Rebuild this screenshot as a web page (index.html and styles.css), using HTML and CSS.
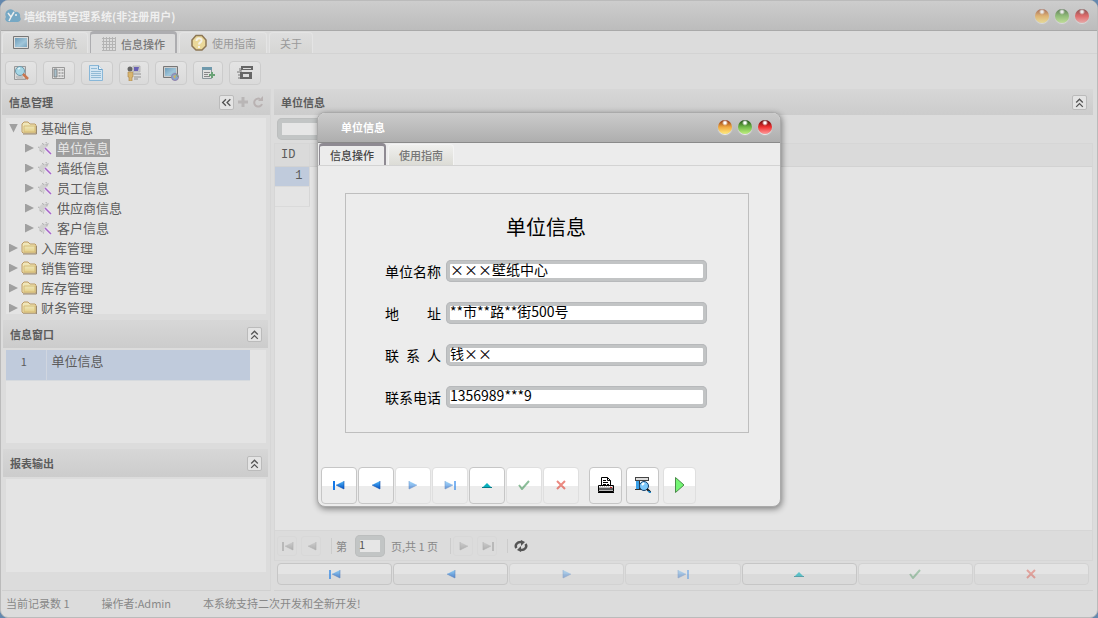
FILE: index.html
```html
<!DOCTYPE html>
<html lang="zh-CN">
  <head>
    <meta charset="UTF-8" />
    <meta name="viewport" content="width=device-width, initial-scale=1.0" />
    <title>墙纸销售管理系统</title>
    <link rel="stylesheet" href="styles.css">
  </head>
  <body>
    <!-- 图标 -->
    <svg class="sprite" aria-hidden="true">
      <defs>
        <linearGradient id="g-blue" x1="0" y1="0" x2="0" y2="1">
          <stop offset="0" stop-color="#55b8f8" />
          <stop offset="1" stop-color="#0052c8" />
        </linearGradient>
        <linearGradient id="g-folder" x1="0" y1="0" x2="0" y2="1">
          <stop offset="0" stop-color="#eee8bb" />
          <stop offset="1" stop-color="#e4ce88" />
        </linearGradient>
        <linearGradient id="g-screen" x1="0" y1="0" x2="1" y2="1">
          <stop offset="0" stop-color="#6f9dba" />
          <stop offset="0.6" stop-color="#a0c6da" />
          <stop offset="1" stop-color="#7ba6bf" />
        </linearGradient>
      </defs>
      <symbol id="first" viewBox="0 0 12 10">
        <path d="M0 1h2v9H0z" fill="#1478e8" />
        <path d="M11 1v8L3 5z" fill="url(#g-blue)" />
        <path d="M3 5l8 4V1" fill="none" stroke="#0a4ca8" stroke-width="0.6" />
      </symbol>
      <symbol id="prev" viewBox="0 0 12 10">
        <path d="M10 1v8L2 5z" fill="url(#g-blue)" />
        <path d="M2 5l8 4V1" fill="none" stroke="#0a4ca8" stroke-width="0.6" />
      </symbol>
      <symbol id="next" viewBox="0 0 12 10">
        <path d="M2 1v8l8-4z" fill="url(#g-blue)" />
        <path d="M2 1v8l8-4" fill="none" stroke="#0a4ca8" stroke-width="0.6" />
      </symbol>
      <symbol id="last" viewBox="0 0 12 10">
        <path d="M1 1v8l8-4z" fill="url(#g-blue)" />
        <path d="M1 1v8l8-4" fill="none" stroke="#0a4ca8" stroke-width="0.6" />
        <path d="M10 1h2v9h-2z" fill="#1478e8" />
      </symbol>
      <symbol id="up" viewBox="0 0 12 10">
        <path d="M1 8h10L6 3z" fill="#08b0bc" />
        <path d="M1 7.500h10" stroke="#077a88" />
      </symbol>
      <symbol id="check" viewBox="0 0 12 10">
        <path d="M1 5l3 4 7-8" fill="none" stroke="#2f8a48" stroke-width="2" />
      </symbol>
      <symbol id="cross" viewBox="0 0 12 10">
        <path d="M2 1l8 8M10 1L2 9" stroke="#dc2a1a" stroke-width="2" />
      </symbol>
      <symbol id="folder" viewBox="0 0 16 14">
        <path d="M1 11V3l2-2h4l2 2h5l1 1v8H2z" fill="#f0e6b8" stroke="#bb9a62" />
        <path d="M3 5h11v6H3z" fill="url(#g-folder)" stroke="#d5bc79" />
        <path d="M2 13h13.500V5" fill="none" stroke="#9a8a70" />
      </symbol>
      <symbol id="wand" viewBox="0 0 16 14">
        <path d="M2 6l4-4 4 2-1 5-3 3-4-2z" fill="#d0d0d0" />
        <path d="M5 2l2 2M1 6l2 1M3 9l2 2M9 1l1 3M6 12h2" stroke="#a8a8a8" stroke-dasharray="1 1" />
        <path d="M8 3l4-1-2 4z" fill="#bcbcbc" />
        <path d="M8 7l6 6" stroke="#efe6f4" stroke-width="3" />
        <path d="M8 7l6 6" stroke="#a565c8" stroke-width="1.500" />
      </symbol>
      <symbol id="dblup" viewBox="0 0 10 10">
        <path d="M2 5l3-3 3 3M2 9l3-3 3 3" fill="none" stroke="#555" stroke-width="1.200" />
      </symbol>
    </svg>

    <div class="window">
      <header class="titlebar">
        <svg class="logo" viewBox="0 0 16 14">
          <path d="M3 13a3 3 0 0 1-2-5 5 5 0 0 1 9-5 4 4 0 0 1 5 5 3 3 0 0 1-2 5z" fill="#76a8c4" />
          <path d="M3 4l3 4 3-5M6 8l-2 4M10 6h2" fill="none" stroke="#eee" stroke-width="1.500" />
        </svg>
        <h1>墙纸销售管理系统(非注册用户)</h1>
        <div class="lights faded">
          <button class="light orange" aria-label="最小化"></button>
          <button class="light green" aria-label="最大化"></button>
          <button class="light red" aria-label="关闭"></button>
        </div>
      </header>

      <nav class="tabs main-tabs">
        <button class="tab">
          <svg width="16" height="14" viewBox="0 0 16 14">
            <path d="M.5.500h15v12H.5z" fill="#ddd" stroke="#777" />
            <path d="M2 2h12v9H2z" fill="url(#g-screen)" />
          </svg>
          系统导航
        </button>
        <button class="tab active">
          <svg width="16" height="16" viewBox="0 0 16 16">
            <path d="M2.500 1v14M5.500 1v14M8.500 1v14M11.500 1v14M14.500 1v14M1 2.500h14M1 5.500h14M1 8.500h14M1 11.500h14M1 14.500h14" stroke="#b4b4b4" />
          </svg>
          信息操作
        </button>
        <button class="tab">
          <svg width="18" height="18" viewBox="0 0 18 18">
            <path d="M6 1.500h6L16 6v6l-4 4H6l-4-4V6z" fill="#ead89a" stroke="#8d7755" stroke-width="1.500" />
            <path d="M6.500 7c0-4 6-3 5 0-.5 1.500-2.500 1.500-2.500 3.500M9 12v2" fill="none" stroke="#f5f2e8" stroke-width="2" />
          </svg>
          使用指南
        </button>
        <button class="tab">关于</button>
      </nav>

      <div class="toolbar">
        <button aria-label="查找">
          <svg width="16" height="16" viewBox="0 0 16 16">
            <path d="M1.500 1.500h11v13h-11z" fill="#d9d9d9" stroke="#999" />
            <path d="M3 12h7M4 14h8" stroke="#aaa" />
            <circle cx="7" cy="6" r="4.500" fill="#a5d6e5" stroke="#6f98aa" />
            <path d="M5 4l2-1" stroke="#e4f4f8" stroke-width="1.500" />
            <path d="M10 9l5 5" stroke="#c9764f" stroke-width="2.500" />
          </svg>
        </button>
        <button aria-label="表单">
          <svg width="16" height="16" viewBox="0 0 16 16">
            <path d="M1.500 2.500h12v11h-12z" fill="#e3e3e3" stroke="#999" />
            <path d="M3 4h3v8H3z" fill="#a8c0cc" stroke="#777" stroke-width=".8" />
            <path d="M7.500 5h2M7.500 8h2M7.500 11h2M10.500 5h2M10.500 8h2M10.500 11h2" stroke="#777" />
          </svg>
        </button>
        <button aria-label="文档">
          <svg width="16" height="16" viewBox="0 0 16 16">
            <path d="M.5.500h9l4 4v11H.5z" fill="#d3e5f2" stroke="#88b7d8" />
            <path d="M9.500.5v4h4" fill="#eef5f9" stroke="#6ea1c7" />
            <path d="M2 3.500h6M2 6.500h10M2 8.500h10M2 10.500h10M2 12.500h10" stroke="#91bad5" />
          </svg>
        </button>
        <button aria-label="用户">
          <svg width="14" height="16" viewBox="0 0 14 16">
            <circle cx="3" cy="4" r="2.500" fill="#666" />
            <path d="M1 7h5v5H5v4H2v-4H1z" fill="#d8b56f" stroke="#b18d54" stroke-width=".7" />
            <path d="M6 1h7v6H6z" fill="#ccc" stroke="#aaa" stroke-width=".7" />
            <path d="M7 2h5l-1 4H7z" fill="#6960b4" />
            <path d="M6 9h8M7 12h7M7 14h4" stroke="#aaa" stroke-width="1.500" />
          </svg>
        </button>
        <button aria-label="网络">
          <svg width="16" height="16" viewBox="0 0 16 16">
            <path d="M.5 1.500h14v11H.5z" fill="#ccc" stroke="#777" />
            <path d="M2 3h11v8H2z" fill="url(#g-screen)" />
            <circle cx="12" cy="12" r="3.500" fill="#87a6cd" stroke="#9280aa" />
            <path d="M10 11l3-1-1 4z" fill="#d0b25f" />
            <path d="M13 9l2 3" stroke="#7fa469" />
          </svg>
        </button>
        <button aria-label="添加">
          <svg width="14" height="16" viewBox="0 0 14 16">
            <path d="M1.500 2.500h9v11h-9z" fill="#e0e0e0" stroke="#8b969b" />
            <path d="M1 2h10v3H1z" fill="#6f99ac" />
            <path d="M3 7.500h6M3 9.500h4M3 11.500h6" stroke="#888" />
            <path d="M11 7v6M8 10h6" stroke="#6aa276" stroke-width="2" />
          </svg>
        </button>
        <button aria-label="窗口">
          <svg width="16" height="16" viewBox="0 0 16 16">
            <path d="M4 1h12v4H4zM3 7h12v7H3z" fill="#666" />
            <path d="M6 9h6v3H6zM6 3h8v1H6z" fill="#ddd" />
            <path d="M3 3v3h2M0 7h3M1 10h2M1 13h2" fill="none" stroke="#777" />
          </svg>
        </button>
      </div>

      <main class="content">
        <aside class="sidebar">
          <div class="panel-head first-head">
            <h2>信息管理</h2>
            <button class="tool" aria-label="收起">
              <svg viewBox="0 0 10 10"><path d="M4.500 2l-3 3 3 3M8.500 2l-3 3 3 3" fill="none" stroke="#555" stroke-width="1.200" /></svg>
            </button>
            <button class="plain" aria-label="新增">
              <svg viewBox="0 0 12 12"><path d="M6 1v10M1 6h10" stroke="#b9b6b6" stroke-width="3" /></svg>
            </button>
            <button class="plain" aria-label="刷新">
              <svg viewBox="0 0 12 12"><path d="M10 8a4 4 0 1 1-2-5" fill="none" stroke="#b9b2b2" stroke-width="2" /><path d="M11 0v5H6z" fill="#b9b2b2" /></svg>
            </button>
          </div>
          <ul class="panel-body tree">
            <li><i class="arrow open"></i><svg><use href="#folder" /></svg><span>基础信息</span></li>
            <li class="child"><i class="arrow"></i><svg><use href="#wand" /></svg><span class="selected">单位信息</span></li>
            <li class="child"><i class="arrow"></i><svg><use href="#wand" /></svg><span>墙纸信息</span></li>
            <li class="child"><i class="arrow"></i><svg><use href="#wand" /></svg><span>员工信息</span></li>
            <li class="child"><i class="arrow"></i><svg><use href="#wand" /></svg><span>供应商信息</span></li>
            <li class="child"><i class="arrow"></i><svg><use href="#wand" /></svg><span>客户信息</span></li>
            <li><i class="arrow"></i><svg><use href="#folder" /></svg><span>入库管理</span></li>
            <li><i class="arrow"></i><svg><use href="#folder" /></svg><span>销售管理</span></li>
            <li><i class="arrow"></i><svg><use href="#folder" /></svg><span>库存管理</span></li>
            <li><i class="arrow"></i><svg><use href="#folder" /></svg><span>财务管理</span></li>
          </ul>

          <div class="panel-head">
            <h2>信息窗口</h2>
            <button class="tool" aria-label="折叠信息窗口"><svg><use href="#dblup" /></svg></button>
          </div>
          <div class="panel-body">
            <table class="window-list">
              <tr>
                <td class="num">1</td>
                <td>单位信息</td>
              </tr>
            </table>
          </div>

          <div class="panel-head">
            <h2>报表输出</h2>
            <button class="tool" aria-label="折叠报表输出"><svg><use href="#dblup" /></svg></button>
          </div>
          <div class="panel-body"></div>
        </aside>

        <section class="center">
          <div class="panel-head">
            <h2>单位信息</h2>
            <button class="tool" aria-label="折叠单位信息"><svg><use href="#dblup" /></svg></button>
          </div>
          <div class="filter">
            <input class="box" type="text" aria-label="查询" />
          </div>
          <div class="grid">
            <table>
              <thead>
                <tr><th class="id">ID</th><th></th></tr>
              </thead>
              <tbody>
                <tr><td class="id current">1</td><td></td></tr>
                <tr><td class="id"></td><td></td></tr>
              </tbody>
            </table>
          </div>
          <div class="pager">
            <button disabled aria-label="首页"><svg><use href="#first" /></svg></button>
            <button disabled aria-label="上一页"><svg><use href="#prev" /></svg></button>
            <label for="page">第</label>
            <input id="page" class="box" type="text" value="1" />
            <span class="total">页,共 1 页</span>
            <button disabled aria-label="下一页"><svg><use href="#next" /></svg></button>
            <button disabled aria-label="末页"><svg><use href="#last" /></svg></button>
            <i class="sep"></i>
            <button class="reload" aria-label="刷新列表">
              <svg viewBox="0 0 14 12">
                <path d="M2.500 8a5 4 0 0 1 5-6M11.500 4a5 4 0 0 1-5 6" fill="none" stroke="#555" stroke-width="2.500" />
                <path d="M7 0l4 2-4 4zM7 12l-4-2 4-4z" fill="#555" />
              </svg>
            </button>
          </div>
          <div class="record-nav">
            <button aria-label="第一条"><svg><use href="#first" /></svg></button>
            <button aria-label="上一条"><svg><use href="#prev" /></svg></button>
            <button disabled aria-label="下一条"><svg><use href="#next" /></svg></button>
            <button disabled aria-label="最后一条"><svg><use href="#last" /></svg></button>
            <button aria-label="编辑"><svg><use href="#up" /></svg></button>
            <button disabled aria-label="保存"><svg><use href="#check" /></svg></button>
            <button disabled aria-label="取消"><svg><use href="#cross" /></svg></button>
          </div>
        </section>
      </main>

      <footer class="statusbar">
        <span>当前记录数 1</span>
        <span>操作者:Admin</span>
        <span>本系统支持二次开发和全新开发!</span>
      </footer>
    </div>

    <!-- 弹出窗口 -->
    <div class="overlay">
      <div class="dialog" role="dialog" aria-labelledby="dialog-title">
        <header class="titlebar">
          <h1 id="dialog-title">单位信息</h1>
          <div class="lights">
            <button class="light orange" aria-label="最小化"></button>
            <button class="light green" aria-label="最大化"></button>
            <button class="light red" aria-label="关闭"></button>
          </div>
        </header>
        <nav class="tabs dialog-tabs">
          <button class="tab active">信息操作</button>
          <button class="tab">使用指南</button>
        </nav>
        <form class="form">
          <h3>单位信息</h3>
          <div class="field">
            <label for="name">单位名称</label>
            <input id="name" class="box" type="text" value="×××壁纸中心" />
          </div>
          <div class="field">
            <label for="address">地 址</label>
            <input id="address" class="box" type="text" value="**市**路**街500号" />
          </div>
          <div class="field">
            <label for="contact">联 系 人</label>
            <input id="contact" class="box" type="text" value="钱××" />
          </div>
          <div class="field">
            <label for="phone">联系电话</label>
            <input id="phone" class="box" type="text" value="1356989***9" />
          </div>
        </form>
        <div class="actions">
          <button aria-label="第一条"><svg><use href="#first" /></svg></button>
          <button aria-label="上一条"><svg><use href="#prev" /></svg></button>
          <button disabled aria-label="下一条"><svg><use href="#next" /></svg></button>
          <button disabled aria-label="最后一条"><svg><use href="#last" /></svg></button>
          <button aria-label="编辑"><svg><use href="#up" /></svg></button>
          <button disabled aria-label="保存"><svg><use href="#check" /></svg></button>
          <button disabled aria-label="取消"><svg><use href="#cross" /></svg></button>
          <div class="extra">
            <button aria-label="打印">
              <svg viewBox="0 0 16 16">
                <path d="M3.500 8.500v-8h6l3 3v5z" fill="#fff" stroke="#000" />
                <path d="M9.500.5v3h3M5 3.500h3M5 5.500h5M5 7.500h3M9 7.500h2" fill="none" stroke="#000" />
                <path d="M.5 8.500h15v6H.5z" fill="#bbb" stroke="#000" />
                <path d="M1 9.500h14" stroke="#fff" stroke-dasharray="1 1" />
                <path d="M1 12h14M0 15.500h16" stroke="#000" />
                <path d="M12 10.500h2" stroke="#c22" />
              </svg>
            </button>
            <button aria-label="预览">
              <svg viewBox="0 0 16 16">
                <path d="M0 0h14v4H0z" fill="#444" />
                <path d="M1 1h12v2H1z" fill="#ddd" />
                <path d="M1 4h3v8H1z" fill="#3aa0e8" />
                <path d="M4 4h1v8H4zM0 12h6v1H0z" fill="#333" />
                <circle cx="9" cy="9" r="4.500" fill="#7cc8fb" stroke="#14406b" />
                <path d="M7 8l2-2" stroke="#fff" stroke-width="2" />
                <path d="M12 12l4 4" stroke="#111" stroke-width="2" />
                <path d="M13 14l3 2" stroke="#1e90d8" stroke-width="1.500" />
              </svg>
            </button>
            <button disabled class="play" aria-label="执行">
              <svg viewBox="0 0 16 16"><path d="M3.500.5L12 8l-8.500 7.500z" fill="#73f573" stroke="#4a8a4a" /></svg>
            </button>
          </div>
        </div>
      </div>
    </div>
  </body>
</html>
```
FILE: styles.css
```css
* {
  box-sizing: border-box;
}

body {
  margin: 0;
  background-color: #6488ae;
  font-family: "Noto Sans CJK SC", sans-serif;
  font-size: 11px;
  line-height: 16px;
  color: #5c5c5c;
}

button,
input {
  margin: 0;
  padding: 0;
  font: inherit;
  color: inherit;
}

h1,
h2,
h3 {
  margin: 0;
  font-size: 11px;
  font-weight: bold;
}

svg {
  display: block;
  flex: none;
}

.sprite {
  position: absolute;
  width: 0;
  height: 0;
}

/* 主窗口 */
.window {
  display: flex;
  flex-direction: column;
  min-height: 100vh;
  background-color: #dcdcdc;
  border: 1px solid #bbb;
  border-radius: 8px;
  overflow: hidden;
}

.titlebar {
  display: flex;
  align-items: center;
  height: 30px;
  padding: 0 8px 0 4px;
  background: linear-gradient(#cdcdcd, #bcbcbc);
  border-bottom: 1px solid #a9a9a9;
}

.titlebar h1 {
  flex: 1;
  color: #efefef;
}

.logo {
  width: 16px;
  height: 14px;
  margin-right: 3px;
}

.lights {
  display: flex;
  gap: 6px;
}

.lights.faded {
  opacity: 0.6;
}

.light {
  width: 14px;
  height: 14px;
  border: none;
  border-radius: 50%;
  box-shadow: 0 1px 1px #eee;
}

.orange {
  background: radial-gradient(circle at 50% 20%, #fff 0 1px, transparent 3px), linear-gradient(#8a3014, #f0a840 50%, #ffec80);
}

.green {
  background: radial-gradient(circle at 50% 20%, #fff 0 1px, transparent 3px), linear-gradient(#1c4a14, #70b848 50%, #c0f080);
}

.red {
  background: radial-gradient(circle at 50% 20%, #fff 0 1px, transparent 3px), linear-gradient(#580808, #f03030 50%, #ff9c9c);
}

/* 标签页 */
.tabs {
  display: flex;
  align-items: flex-end;
  gap: 2px;
  height: 23px;
  padding-left: 1px;
  border-bottom: 1px solid #d3d3d3;
}

.tab {
  display: flex;
  align-items: center;
  gap: 4px;
  height: 21px;
  padding: 0 10px;
  background: linear-gradient(#dedede, #d6d6d4);
  border: 1px solid #e4e4e4;
  border-bottom: none;
  border-radius: 4px 4px 0 0;
  color: #999;
}

.tab.active {
  height: 22px;
  background: #dcdcdc;
  border: 2px solid #adadb0;
  border-top-width: 3px;
  border-left-width: 1px;
  border-bottom: none;
  font-weight: 500;
  color: #777;
}

/* 工具栏 */
.toolbar {
  display: flex;
  gap: 6px;
  padding: 7px 4px 4px;
}

.toolbar button {
  padding: 3px 7px;
  background: linear-gradient(#e4e4e4, #dadada);
  border: 1px solid #ccc;
  border-radius: 4px;
}

/* 内容 */
.content {
  display: flex;
  flex: 1;
  gap: 3px;
  padding: 0 4px 0 1px;
}

.sidebar {
  display: flex;
  flex-direction: column;
  width: 269px;
  padding-bottom: 18px;
  border-right: 1px solid #d6d6d6;
  border-bottom: 1px solid #d0d0d0;
}

.panel-head {
  display: flex;
  align-items: center;
  height: 28px;
  margin: 6px 2px 0 1px;
  padding: 0 6px 0 7px;
  background: linear-gradient(#d7d7d7, #cccccc);
}

.first-head,
.center .panel-head {
  height: 26px;
  margin: 0;
}

.panel-head h2 {
  flex: 1;
}

.tool {
  width: 15px;
  height: 15px;
  padding: 1px;
  background-color: #e4e4e4;
  border: 1px solid #bbb;
  border-radius: 2px;
}

.tool svg {
  width: 11px;
  height: 11px;
}

.plain {
  width: 12px;
  height: 12px;
  margin-left: 3px;
  background: none;
  border: none;
}

.panel-body {
  flex: 1 1 0;
  min-height: 0;
  margin: 2px 4px 0;
  background-color: #e4e4e4;
  overflow: hidden;
}

.tree {
  flex: 2 1 10px;
  margin-top: 3px;
  padding: 0;
  list-style: none;
  font-size: 13px;
}

.tree li {
  display: flex;
  align-items: center;
  height: 20px;
  padding-left: 3px;
}

.tree .child {
  padding-left: 19px;
}

.tree svg {
  width: 16px;
  height: 14px;
  margin: 0 3px;
}

.tree span {
  padding: 0 1px;
}

.tree .selected {
  padding: 1px;
  background-color: #9e9e9e;
  color: #e6e6e6;
}

.arrow {
  width: 9px;
  height: 9px;
  background-color: #a0a0a0;
  clip-path: polygon(0 0, 100% 50%, 0 100%);
}

.arrow.open {
  clip-path: polygon(0 0, 100% 0, 50% 100%);
}

table {
  border-collapse: collapse;
}

td,
th {
  padding: 0;
  font-weight: normal;
}

.window-list {
  width: 244px;
  background-color: #c0cbdc;
  font-size: 13px;
}

.window-list td {
  height: 30px;
  padding: 3px 5px;
  border-bottom: 1px solid #d6dade;
  vertical-align: top;
}

.window-list .num {
  width: 40px;
  padding: 3px 4px 3px 0;
  border-right: 1px solid #d0d6e0;
  font-size: 11px;
  text-align: center;
}

/* 单位信息列表 */
.center {
  display: flex;
  flex: 1;
  flex-direction: column;
  min-width: 0;
  border-bottom: 1px solid #d0d0d0;
}

.box {
  height: 22px;
  padding: 0 4px 4px;
  background-color: #fff;
  border: none;
  border-radius: 5px;
  box-shadow: inset 0 0 0 1px #b7b9bb, inset 0 0 0 4px #c2c4c5;
}

.filter {
  padding: 3px;
}

.filter .box,
.pager .box {
  display: block;
  background-color: #e6e6e6;
  box-shadow: inset 0 0 0 1px #bcbebe, inset 0 0 0 5px #c2c5c5;
}

.filter .box {
  width: 160px;
}

.grid {
  flex: 1;
  background-color: #e4e4e4;
  border: 1px solid #d6d6d6;
}

.grid table {
  width: 100%;
  font-family: "Liberation Mono", "Noto Sans CJK SC", monospace;
  font-size: 12px;
}

.grid th {
  height: 22px;
  background-color: #dadada;
  border-bottom: 1px solid #d2d2d2;
  text-align: left;
}

.grid td {
  height: 20px;
}

.grid .id {
  width: 34px;
  padding: 0 6px;
  border-right: 1px solid #d6d6d6;
}

.grid td.id {
  border-bottom: 1px solid #dadada;
  text-align: right;
}

.grid td.current {
  background-color: #c0cbdc;
}

.pager {
  display: flex;
  align-items: center;
  height: 30px;
  padding: 0 2px;
  border: 1px solid #d6d6d6;
  border-top: none;
  color: #888;
}

.pager button {
  width: 20px;
  height: 20px;
  margin-right: 4px;
  padding: 4px;
  background: none;
  border: 1px solid #d8d8d8;
  border-radius: 3px;
}

.pager svg {
  width: 12px;
  height: 10px;
}

.pager button:disabled svg {
  filter: grayscale(1);
  opacity: 0.3;
}

.pager label {
  margin: 0 8px 0 6px;
  padding-left: 4px;
  border-left: 1px solid #ccc;
}

.pager .box {
  width: 30px;
  color: #555;
}

.pager .total {
  margin: 0 2px 0 6px;
  padding-right: 12px;
  border-right: 1px solid #ccc;
}

.sep {
  width: 1px;
  height: 14px;
  margin: 0 4px 0 6px;
  background-color: #ccc;
}

.pager .reload {
  padding: 0 2px;
  border: none;
}

.reload svg {
  width: 14px;
  height: 12px;
}

.record-nav {
  display: flex;
  gap: 1px;
  padding: 2px 4px 5px 3px;
}

.record-nav button,
.actions button {
  display: flex;
  align-items: center;
  justify-content: center;
  border: 1px solid #c6c6c6;
  border-radius: 4px;
}

.record-nav button {
  flex: 1;
  height: 22px;
  background: linear-gradient(#e4e4e4 50%, #dadada 50%);
}

.record-nav button:disabled {
  border-color: #d2d2d2;
}

.record-nav svg {
  width: 12px;
  height: 10px;
  opacity: 0.6;
}

.record-nav button:disabled svg {
  opacity: 0.35;
}

.statusbar {
  display: flex;
  gap: 32px;
  height: 26px;
  padding: 4px 5px;
  color: #888;
}

/* 弹出窗口 */
.overlay {
  position: absolute;
  inset: 0;
  display: flex;
  align-items: center;
  justify-content: center;
}

.dialog {
  width: 464px;
  background-color: #ececec;
  border: 1px solid #aaa;
  border-radius: 8px;
  box-shadow: 1px 2px 6px rgba(0, 0, 0, 0.45);
  overflow: hidden;
}

.dialog .titlebar {
  padding-left: 23px;
  background: linear-gradient(#cbcbcb, #aeaeae);
  border-bottom-color: #8a8a8a;
}

.dialog .titlebar h1 {
  color: #fff;
}

.dialog .tab {
  background: linear-gradient(#f0f0ee, #dcdcd6);
  border-color: #f4f4f4;
  font-weight: 500;
  color: #777;
}

.dialog .tab.active {
  background: #ececec;
  border-color: #8e8a92;
  color: #444;
}

.form {
  margin: 27px 31px 34px 27px;
  padding: 19px 41px 24px 39px;
  border: 1px solid #bebebe;
  font-size: 14px;
  color: #000;
}

.form h3 {
  margin-bottom: 19px;
  font-size: 20px;
  font-weight: normal;
  line-height: 28px;
  text-align: center;
}

.field {
  display: flex;
  align-items: center;
  gap: 5px;
  margin-bottom: 20px;
}

.field:last-child {
  margin-bottom: 0;
}

.field label {
  width: 56px;
  text-align-last: justify;
}

.field .box {
  flex: 1;
  min-width: 0;
}

.actions {
  display: flex;
  gap: 1px;
  padding: 0 3px 2px;
}

.actions button {
  width: 36px;
  height: 37px;
  background: linear-gradient(#fff 50%, #ececec 50%);
}

.actions button:disabled {
  border-color: #dfdfdf;
}

.actions svg {
  width: 12px;
  height: 10px;
}

.actions button:disabled svg {
  opacity: 0.55;
}

.actions .extra {
  display: flex;
  gap: 4px;
  margin-left: 9px;
}

.extra button {
  width: 33px;
}

.extra svg,
.extra button:disabled svg {
  width: 16px;
  height: 16px;
}

.actions .play:disabled svg {
  opacity: 1;
}
```
